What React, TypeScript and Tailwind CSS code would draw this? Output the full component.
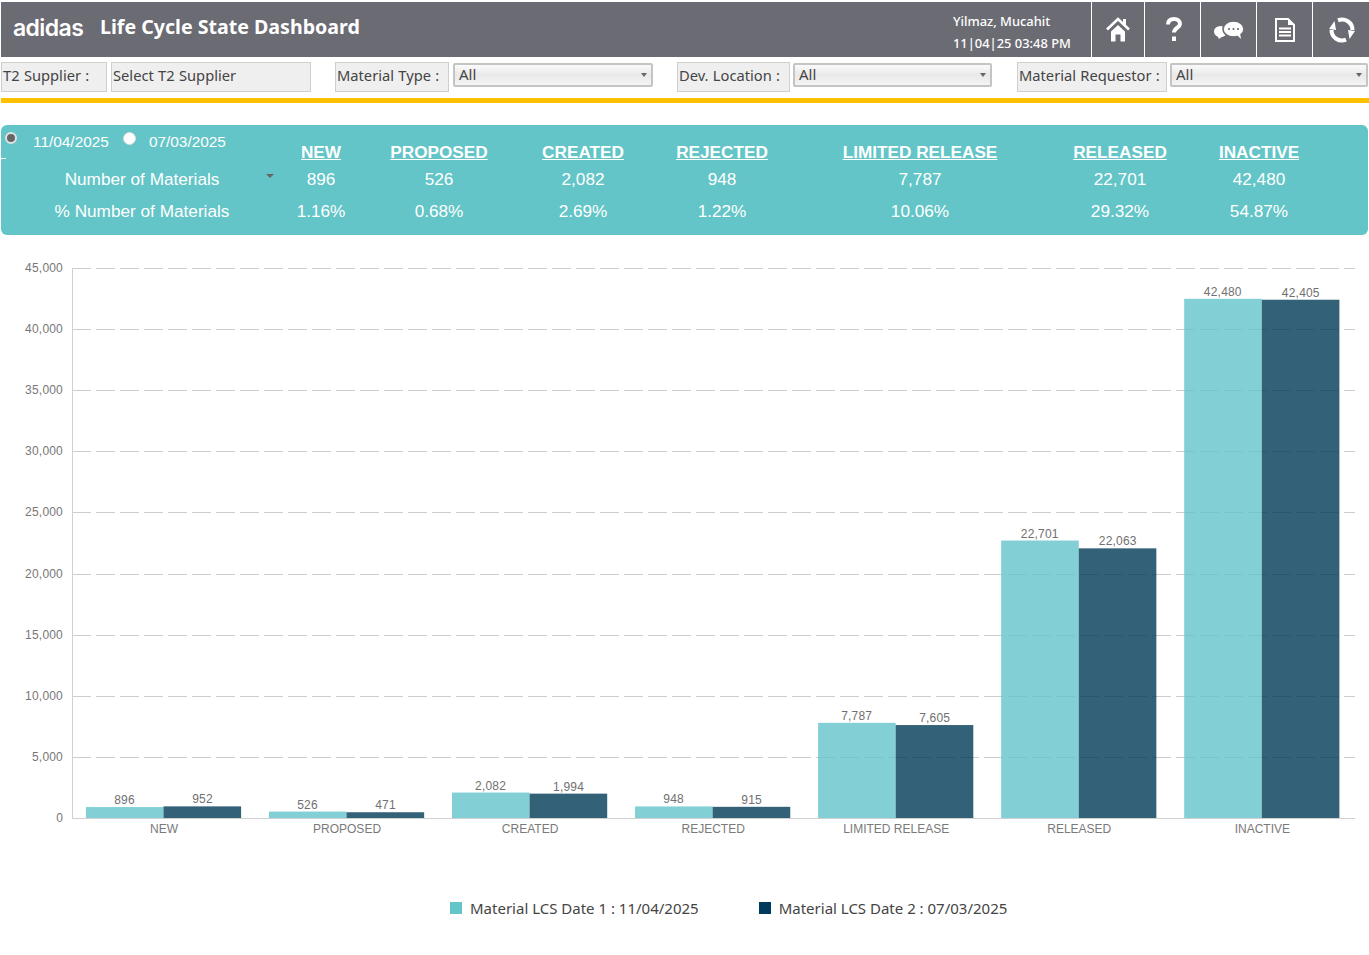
import React from 'react';

const uiFont = 'font-["Noto_Sans",sans-serif]';
const arial = 'font-["Liberation_Sans",sans-serif]';

const states = [
  { name: 'NEW', a: 896, b: 952, pct: '1.16%' },
  { name: 'PROPOSED', a: 526, b: 471, pct: '0.68%' },
  { name: 'CREATED', a: 2082, b: 1994, pct: '2.69%' },
  { name: 'REJECTED', a: 948, b: 915, pct: '1.22%' },
  { name: 'LIMITED RELEASE', a: 7787, b: 7605, pct: '10.06%' },
  { name: 'RELEASED', a: 22701, b: 22063, pct: '29.32%' },
  { name: 'INACTIVE', a: 42480, b: 42405, pct: '54.87%' },
];

const FilterLabel = ({ text, className }: { text: string; className: string }) => (
  <div className={`h-[30px] border border-[#cfcfcf] bg-[#efefef] pl-[1px] pb-[4px] flex items-center text-[14.7px] [word-spacing:0.5px] text-[#444] whitespace-nowrap ${className}`}>
    {text}
  </div>
);

const FilterSelect = ({ className }: { className: string }) => (
  <div className={`h-[24px] mt-[1px] rounded-[2px] border-2 border-[#c4c4c4] bg-gradient-to-b from-[#fafafa] via-[#e9e9e9] to-[#f4f4f4] pl-[4px] pr-[4px] pb-[2px] flex items-center justify-between text-[15px] text-[#444] ${className}`}>
    <span>All</span>
    <span className="mt-[2px] w-0 h-0 border-x-[3px] border-x-transparent border-t-[4px] border-t-[#666]" />
  </div>
);

const HomeIcon = () => (
  <svg width="24" height="25" viewBox="0 0 24 25" fill="white" className="-ml-[1px]">
    <rect x="17" y="2" width="3" height="6" />
    <path d="M1 12.500 12 2l11 10.500" fill="none" stroke="white" strokeWidth="2.600" />
    <path d="M5 14.500 12 8l7 6.500V24.500H14.500V17.500H9.500V24.500H5Z" />
  </svg>
);

const HelpIcon = () => (
  <svg width="16" height="25" viewBox="0 0 16 25" fill="white" className="ml-[2px]">
    <path d="M2 7.500C2 3.500 4.500 2 8 2c3.500 0 6 2 6 5 0 3.500-6 4-6 8.500" fill="none" stroke="white" strokeWidth="4" />
    <rect x="6" y="19.500" width="4" height="4.500" />
  </svg>
);

const ChatIcon = () => (
  <svg width="30" height="18" viewBox="0 0 30 18" fill="white" className="ml-[1px]">
    <ellipse cx="6.500" cy="10.500" rx="6.500" ry="5.500" />
    <path d="M3 14 5 18 9 15Z" />
    <ellipse cx="19.500" cy="8" rx="10.500" ry="8" stroke="#6b6b73" strokeWidth="1.500" />
    <path d="M23 14 27 18 26 12Z" />
    <circle cx="15" cy="8" r="1.100" fill="#6b6b73" />
    <circle cx="19.500" cy="8" r="1.100" fill="#6b6b73" />
    <circle cx="24" cy="8" r="1.100" fill="#6b6b73" />
  </svg>
);

const DocIcon = () => (
  <svg width="20" height="24" viewBox="0 0 20 24" fill="white" className="ml-[1px]">
    <path d="M1 1H13L19 7V23H1Z" fill="none" stroke="white" strokeWidth="2" />
    <path d="M13 1V7H19Z" />
    <rect x="4" y="9.500" width="12" height="2" />
    <rect x="4" y="13" width="12" height="2" />
    <rect x="4" y="16.500" width="12" height="2" />
  </svg>
);

const RefreshIcon = () => (
  <svg width="26" height="26" viewBox="0 0 26 26" fill="none" stroke="white" strokeWidth="4" className="ml-[2px]">
    <path d="M9 3.300A10.500 10.500 0 0 1 23.500 13" />
    <path d="M17 22.700A10.500 10.500 0 0 1 2.500 13" />
    <path d="M19 13 26 14 20.500 22Z" fill="white" stroke="none" />
    <path d="M7 13 0 12 5.500 4Z" fill="white" stroke="none" />
  </svg>
);

const Chart = () => {
  const left = 72;
  const right = 1355;
  const top = 268;
  const bottom = 818;
  const y = (v: number) => bottom - (v / 45000) * (bottom - top);
  const ticks = [0, 5000, 10000, 15000, 20000, 25000, 30000, 35000, 40000, 45000];
  return (
    <svg width="1369" height="620" viewBox="0 235 1369 620" className="block" fontFamily="Liberation Sans, sans-serif" fontSize="12" letterSpacing="0.2">
      {ticks.map((t) => (
        <g key={t}>
          {t > 0 && <line x1={left} x2={right} y1={Math.round(y(t)) + 0.5} y2={Math.round(y(t)) + 0.5} stroke="#cdcdcd" strokeDasharray="19 5" />}
          <text x={63} y={y(t) + 4} textAnchor="end" fill="#777">{t.toLocaleString('en-US')}</text>
        </g>
      ))}
      <line x1={left + 0.5} x2={left + 0.5} y1={top} y2={bottom} stroke="#d0d0d0" />
      {states.map((s, i) => {
        const c = 163.5 + 183.05 * i;
        return (
          <g key={s.name}>
            <rect x={c - 77.6} y={y(s.a)} width={77.6} height={bottom - y(s.a)} fill="#63c3cb" fillOpacity="0.8" />
            <rect x={c} y={y(s.b)} width={77.6} height={bottom - y(s.b)} fill="#003a56" fillOpacity="0.8" />
            <text x={c - 39} y={y(s.a) - 3} textAnchor="middle" fill="#707070">{s.a.toLocaleString('en-US')}</text>
            <text x={c + 39} y={y(s.b) - 3} textAnchor="middle" fill="#707070">{s.b.toLocaleString('en-US')}</text>
            <text x={c + 0.5} y={833} textAnchor="middle" fill="#7a7a7a" letterSpacing="0">{s.name}</text>
          </g>
        );
      })}
      <line x1={left} x2={right} y1={bottom + 0.5} y2={bottom + 0.5} stroke="#d0d0d0" />
    </svg>
  );
};

const NavCell = ({ w, children }: { w: string; children: React.ReactNode }) => (
  <div className={`${w} h-full border-l border-white flex items-center justify-center text-white`}>{children}</div>
);

export default function App() {
  return (
    <div className={`w-[1369px] h-[955px] bg-white overflow-hidden pt-[2px] ${uiFont}`}>
      <header className="ml-[1px] h-[55px] bg-[#6b6b73] flex items-stretch text-white">
        <div className='ml-[12px] w-[87px] self-center pb-[2px] text-[23px] font-semibold tracking-[-0.6px] font-["Inter",sans-serif]'>adidas</div>
        <h1 className="self-center pb-[5px] text-[19.6px] font-bold">Life Cycle State Dashboard</h1>
        <div className="ml-auto w-[138px] pt-[5px] flex flex-col justify-center text-[12.9px] leading-[22px] font-medium">
          <div>Yilmaz, Mucahit</div>
          <div>11|04|25 03:48 PM</div>
        </div>
        <NavCell w="w-[53px]"><HomeIcon /></NavCell>
        <NavCell w="w-[56px]"><HelpIcon /></NavCell>
        <NavCell w="w-[56px]"><ChatIcon /></NavCell>
        <NavCell w="w-[56px]"><DocIcon /></NavCell>
        <NavCell w="w-[57px]"><RefreshIcon /></NavCell>
      </header>

      <div className="mt-[5px] flex items-start h-[30px] pl-[1px]">
        <FilterLabel text="T2 Supplier :" className="w-[106px]" />
        <FilterLabel text="Select T2 Supplier" className="w-[200px] ml-[4px]" />
        <FilterLabel text="Material Type :" className="w-[114px] ml-[24px]" />
        <FilterSelect className="w-[200px] ml-[4px]" />
        <FilterLabel text="Dev. Location :" className="w-[113px] ml-[24px]" />
        <FilterSelect className="w-[199px] ml-[3px]" />
        <FilterLabel text="Material Requestor :" className="w-[150px] ml-[25px]" />
        <FilterSelect className="w-[198px] ml-[3px]" />
      </div>

      <div className="mt-[6px] ml-[1px] h-[5px] bg-[#ffc000]" />

      <section className={`relative mt-[22px] ml-[1px] h-[110px] w-[1367px] rounded-[6px] bg-[#63c5c7] text-white text-[17.2px] ${arial}`}>
        <div className="absolute left-[4px] top-[7px] flex items-start text-[15.4px] leading-[20px]">
          <span className="w-[12px] h-[12px] rounded-full bg-[#666] border-2 border-[#e2e2e2]" />
          <span className="ml-[16px]">11/04/2025</span>
          <span className="ml-[14px] w-[13px] h-[13px] rounded-full bg-white border border-[#ddd]" />
          <span className="ml-[13px]">07/03/2025</span>
        </div>
        <div className="absolute left-0 top-[33px] w-[5px] h-px bg-white" />
        <div className="absolute left-[265px] top-[49px] w-0 h-0 border-x-[4px] border-x-transparent border-t-[4px] border-t-[#666]" />
        <div className="pt-[16px] grid grid-cols-[282px_76px_160px_128px_150px_246px_154px_124px_1fr] grid-rows-[23px_32px_32px] text-center">
          <div />
          {states.map((s) => (
            <div key={s.name} className="self-center font-bold underline">{s.name}</div>
          ))}
          <div />
          <div className="self-center">Number of Materials</div>
          {states.map((s) => (
            <div key={s.name} className="self-center">{s.a.toLocaleString('en-US')}</div>
          ))}
          <div />
          <div className="self-center">% Number of Materials</div>
          {states.map((s) => (
            <div key={s.name} className="self-center">{s.pct}</div>
          ))}
        </div>
      </section>

      <Chart />

      <div className="mt-[42px] flex items-center text-[15px] text-[#444] pl-[450px]">
        <span className="w-[12px] h-[12px] bg-[#63c5c7]" />
        <span className="ml-[8px]">Material LCS Date 1 : 11/04/2025</span>
        <span className="ml-[60px] w-[12px] h-[12px] bg-[#003a5d]" />
        <span className="ml-[8px]">Material LCS Date 2 : 07/03/2025</span>
      </div>
    </div>
  );
}
